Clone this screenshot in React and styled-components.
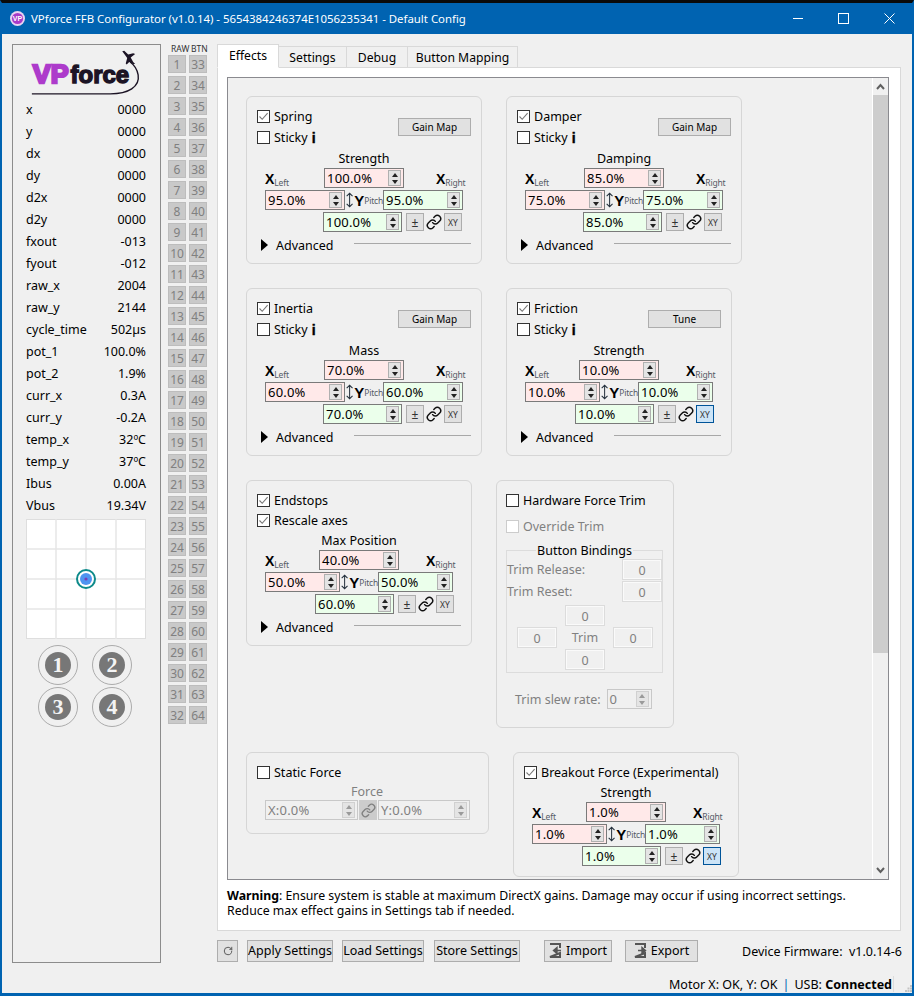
import React from 'react';
import styled, { createGlobalStyle } from 'styled-components';
import { Link, RotateCw } from 'lucide-react';

const GlobalStyle = createGlobalStyle`
  html, body {
    margin: 0;
    padding: 0;
    background: #f0f0f0;
  }
  * {
    box-sizing: border-box;
  }
  body {
    font-family: "Noto Sans", "Open Sans", sans-serif;
    font-size: 12.5px;
    color: #000000;
  }
`

const Window = styled.div`
  display: flex;
  flex-direction: column;
  width: 914px;
  height: 996px;
  overflow: hidden;
  background: #f0f0f0;
  border-top: 3px solid #0a0a0a;
  border-left: 2px solid #0063b1;
  border-right: 2px solid #0063b1;
  border-bottom: 3px solid #0063b1;
`

const TitleBar = styled.div`
  display: flex;
  align-items: center;
  flex: none;
  height: 31px;
  padding-left: 8px;
  background: #0063b1;
  color: #ffffff;
`

const TitleText = styled.div`
  flex: 1;
  margin-left: 6px;
  font-size: 11.4px;
`

const WindowButton = styled.div`
  display: flex;
  align-items: center;
  justify-content: center;
  width: 45.5px;
  height: 31px;
`

const Main = styled.div`
  display: flex;
  align-items: flex-start;
  flex: none;
  height: 928px;
  padding: 10px 0 0 10px;
`

const LeftPanel = styled.div`
  display: flex;
  flex-direction: column;
  flex: none;
  width: 149px;
  height: 919px;
  padding: 0 14px 0 13px;
  border: 1px solid #8c8c8c;
`

const LogoWrap = styled.div`
  display: flex;
  flex: none;
  height: 53px;
  margin: 0 -13px;
`

const StatRow = styled.div`
  display: flex;
  align-items: center;
  justify-content: space-between;
  flex: none;
  height: 22px;
  white-space: nowrap;
`

const PlotWrap = styled.div`
  display: flex;
  flex: none;
  margin-top: 3px;
`

const HatGrid = styled.div`
  display: grid;
  grid-template-columns: 40px 40px;
  column-gap: 14px;
  row-gap: 2px;
  justify-content: center;
  margin: 6px 1px 0 -1px;
`

const HatButton = styled.div`
  display: flex;
  align-items: center;
  justify-content: center;
  width: 40px;
  height: 40px;
  border: 1px solid #ababab;
  border-radius: 50%;
`

const HatFace = styled.div`
  display: flex;
  align-items: center;
  justify-content: center;
  width: 26px;
  height: 26px;
  border-radius: 50%;
  background: #777777;
  color: #f4f4f4;
  font-family: "Liberation Serif", serif;
  font-weight: 700;
  font-size: 22px;
`

const RawColumn = styled.div`
  flex: none;
  width: 40px;
  margin-left: 7px;
`

const RawHeader = styled.div`
  display: grid;
  grid-template-columns: 20px 17px;
  height: 11px;
  padding-left: 3px;
  font-size: 8.5px;
  line-height: 9px;
  color: #333333;
  white-space: nowrap;
`

const RawGrid = styled.div`
  display: grid;
  grid-template-columns: 18px 18px;
  grid-auto-rows: 18px;
  gap: 3px;
`

const RawCell = styled.div`
  display: flex;
  align-items: center;
  justify-content: center;
  background: #c9c9c9;
  border: 1px solid #bdbdbd;
  color: #808080;
  font-size: 12px;
`

const RightColumn = styled.div`
  display: flex;
  flex-direction: column;
  flex: none;
  width: 684px;
  margin-left: 9px;
`

const TabBar = styled.div`
  position: relative;
  z-index: 1;
  display: flex;
  align-items: flex-end;
  flex: none;
  height: 24px;
  margin-bottom: -1px;
`

const Tab = styled.div`
  display: flex;
  align-items: center;
  justify-content: center;
  width: ${p => p.$w}px;
  height: ${p => (p.$active ? 24 : 22)}px;
  padding-bottom: ${p => (p.$active ? 2 : 0)}px;
  background: ${p => (p.$active ? '#ffffff' : '#f0f0f0')};
  border: 1px solid #d9d9d9;
  border-left-width: ${p => (p.$active ? 1 : 0)}px;
  border-bottom-color: ${p => (p.$active ? '#ffffff' : '#d9d9d9')};
  font-size: 12.2px;
`

const Pane = styled.div`
  display: flex;
  flex-direction: column;
  flex: none;
  height: 864px;
  padding: 9px 11px 0 9px;
  background: #ffffff;
  border: 1px solid #d9d9d9;
`

const ScrollFrame = styled.div`
  display: flex;
  flex: none;
  height: 803px;
  overflow: hidden;
  background: #f0f0f0;
  border: 1px solid #8a8a8f;
`

const ScrollContent = styled.div`
  display: flex;
  flex-direction: column;
  flex: 1;
  gap: 24px;
  padding: 18px 0 0 18px;
  overflow: hidden;
`

const CardRow = styled.div`
  display: flex;
  align-items: flex-start;
  flex: none;
  gap: 24px;
`

const Scrollbar = styled.div`
  display: flex;
  flex-direction: column;
  align-items: stretch;
  flex: none;
  width: 16px;
  border-left: 1px solid #ffffff;
`

const ScrollArrow = styled.div`
  display: flex;
  align-items: center;
  justify-content: center;
  flex: none;
  height: 17px;
`

const ScrollThumb = styled.div`
  flex: none;
  height: 558px;
  background: #cdcdcd;
`

const ScrollTrack = styled.div`
  flex: 1;
`

const Card = styled.div`
  flex: none;
  width: ${p => p.$w}px;
  height: ${p => p.$h}px;
  padding: 9px 10px 0 ${p => p.$pl || 10}px;
  border: 1px solid #d6d6d6;
  border-radius: 6px;
`

const CardHeader = styled.div`
  display: flex;
  align-items: center;
  justify-content: space-between;
`

const CheckRow = styled.div`
  display: flex;
  align-items: center;
  gap: 4px;
  height: ${p => p.$h || 20}px;
  margin-top: ${p => p.$mt || 0}px;
  color: ${p => (p.$disabled ? '#808080' : '#000000')};
  white-space: nowrap;
`

const CheckBox = styled.span`
  display: flex;
  align-items: center;
  justify-content: center;
  flex: none;
  width: 13px;
  height: 13px;
  background: #ffffff;
  border: 1px solid ${p => (p.$disabled ? '#cccccc' : '#333333')};
`

const Info = styled.b`
  font-family: "Liberation Sans", sans-serif;
  font-size: 14px;
  font-weight: 700;
  -webkit-text-stroke: 0.4px #000000;
`

const SmallButton = styled.div`
  display: flex;
  align-items: center;
  justify-content: center;
  flex: none;
  width: 73px;
  height: 18px;
  background: #e1e1e1;
  border: 1px solid #adadad;
  font-size: 10px;
`

const Gains = styled.div`
  margin-left: 8px;
`

const Caption = styled.div`
  width: ${p => p.$w}px;
  height: ${p => p.$h || 20}px;
  margin-left: ${p => p.$ml}px;
  line-height: ${p => (p.$h || 20) + 2}px;
  text-align: center;
  white-space: nowrap;
  color: ${p => (p.$disabled ? '#808080' : '#000000')};
`

const GainRow = styled.div`
  display: flex;
  align-items: center;
  height: 20px;
  margin-bottom: 2px;
  padding-left: ${p => p.$pl || 0}px;
`

const AxisLabel = styled.div`
  display: flex;
  align-items: flex-end;
  flex: none;
  width: ${p => p.$w}px;
  height: 20px;
  margin-left: ${p => p.$ml || 0}px;
  padding-bottom: 1px;
  font-family: "Liberation Sans", sans-serif;
  font-size: 14px;
  font-weight: 700;
  line-height: 15px;
  white-space: nowrap;
`

const AxisSub = styled.span`
  font-family: "Noto Sans", sans-serif;
  font-size: 8.5px;
  font-weight: 400;
  line-height: 9px;
  color: #555b66;
  letter-spacing: -0.2px;
`

const PitchLabel = styled.div`
  display: flex;
  align-items: center;
  flex: none;
  width: 38px;
  height: 20px;
  font-family: "Liberation Sans", sans-serif;
  font-size: 15px;
  font-weight: 700;
  white-space: nowrap;
  overflow: hidden;
`

const SpinBox = styled.div`
  display: flex;
  align-items: center;
  flex: none;
  width: ${p => p.$w}px;
  height: 20px;
  padding-left: 2px;
  background: ${p => ({ red: '#ffe9e9', green: '#ebffeb' }[p.$tone] || 'transparent')};
  border: 1px solid ${p => (p.$disabled ? '#c8c8c8' : '#7a7a7a')};
  color: ${p => (p.$disabled ? '#808080' : '#000000')};
  font-size: 13px;
  letter-spacing: 0.2px;
`

const SpinValue = styled.span`
  flex: 1;
  white-space: nowrap;
`

const Stepper = styled.div`
  display: flex;
  flex-direction: column;
  flex: none;
  width: 13px;
  height: 16px;
  margin-right: 2px;
  background: #e4e4e4;
  border: 1px solid ${p => (p.$disabled ? '#d0d0d0' : '#b0b0b0')};
`

const StepArrow = styled.span`
  display: flex;
  align-items: center;
  justify-content: center;
  flex: 1;

  &::after {
    content: "";
    border-left: 3px solid transparent;
    border-right: 3px solid transparent;
    ${p => (p.$down ? 'border-top' : 'border-bottom')}: 4px solid ${p => (p.$disabled ? '#9a9a9a' : '#222222')};
  }
`

const SquareButton = styled.div`
  display: flex;
  align-items: center;
  justify-content: center;
  flex: none;
  width: 18px;
  height: 18px;
  margin-left: ${p => p.$ml || 0}px;
  background: ${p => (p.$on ? '#cce4f7' : '#e1e1e1')};
  border: 1px solid ${p => (p.$on ? '#005499' : '#adadad')};
  color: #333333;
  font-size: ${p => p.$fs || 8.5}px;
`

const ChainSlot = styled.div`
  display: flex;
  align-items: center;
  justify-content: center;
  flex: none;
  width: 20px;
  height: 18px;
`

const AdvancedRow = styled.div`
  display: flex;
  align-items: center;
  height: 20px;
  margin-top: 3px;
`

const Triangle = styled.span`
  flex: none;
  margin: 0 8px 0 4px;
  border-top: 6.5px solid transparent;
  border-bottom: 6.5px solid transparent;
  border-left: 7px solid #000000;
`

const AdvancedRule = styled.span`
  flex: 1;
  height: 1px;
  margin: 0 0 4px 20px;
  background: #a8a8a8;
`

const Bindings = styled.fieldset`
  width: 157px;
  height: 132px;
  margin: 5px 0 0;
  padding: 0;
  border: 1px solid #dcdcdc;

  legend {
    height: 18px;
    margin: 0 auto;
    padding: 0 1px;
    line-height: 20px;
  }
`

const BindingRow = styled.div`
  display: flex;
  align-items: center;
  justify-content: space-between;
  height: 21px;
  margin-bottom: 1px;
  line-height: 21px;
  color: #808080;
`

const BindingBox = styled.div`
  display: flex;
  align-items: center;
  justify-content: center;
  width: 40px;
  height: 21px;
  padding-top: 1px;
  border: 1px solid #dcdcdc;
  box-shadow: inset 0 0 0 1px #fafafa;
  color: #808080;
`

const TrimCross = styled.div`
  display: grid;
  grid-template-columns: 40px 40px 40px;
  grid-auto-rows: 21px;
  gap: 1px 8px;
  align-items: center;
  justify-items: center;
  margin: 3px 0 0 10px;
  color: #808080;
`

const SlewRow = styled.div`
  display: flex;
  align-items: center;
  height: 20px;
  margin: 16px 0 0 9px;
  color: #808080;
  gap: 6px;
  white-space: nowrap;
`

const StaticRow = styled.div`
  display: flex;
  align-items: center;
  margin-left: 8px;
  gap: 1px;
`

const DisabledChain = styled.div`
  display: flex;
  align-items: center;
  justify-content: center;
  flex: none;
  width: 18px;
  height: 20px;
  background: #cccccc;
`

const Warning = styled.div`
  margin-top: 8px;
  font-size: 12.3px;
  line-height: 15px;
  white-space: nowrap;
`

const Footer = styled.div`
  display: flex;
  align-items: center;
  flex: none;
  height: 23px;
  margin-top: 8px;
`

const FootButton = styled.div`
  display: flex;
  align-items: center;
  justify-content: center;
  gap: 4px;
  flex: none;
  width: ${p => p.$w}px;
  height: 22px;
  margin-left: ${p => p.$ml || 0}px;
  background: #e1e1e1;
  border: 1px solid #adadad;
  white-space: nowrap;
`

const Firmware = styled.div`
  margin-left: 44px;
  padding-top: 2px;
  white-space: nowrap;
`

const StatusBar = styled.div`
  display: flex;
  align-items: center;
  justify-content: flex-end;
  flex: 1;
  padding-top: 13px;
  white-space: nowrap;
`

const StatusPipe = styled.span`
  margin: 0 5px;
  color: #0063b1;
`

const StatusDivider = styled.span`
  flex: none;
  width: 1px;
  height: 16px;
  margin: 0 11px 0 1px;
  background: #dcdcdc;
`

const SizeGrip = styled.span`
  display: flex;
  flex: none;
  align-self: flex-end;
  width: 7px;
  height: 7px;
  margin-bottom: 1px;
`

const stats = [
  ['x', '0000'], ['y', '0000'], ['dx', '0000'], ['dy', '0000'], ['d2x', '0000'],
  ['d2y', '0000'], ['fxout', '-013'], ['fyout', '-012'], ['raw_x', '2004'], ['raw_y', '2144'],
  ['cycle_time', '502µs'], ['pot_1', '100.0%'], ['pot_2', '1.9%'], ['curr_x', '0.3A'], ['curr_y', '-0.2A'],
  ['temp_x', '32ºC'], ['temp_y', '37ºC'], ['Ibus', '0.00A'], ['Vbus', '19.34V'],
]

const WIDE = { lead: 59, top: 80, side: 80, gap: 32, labelW: 30, bottomLead: 58 }
const NARROW = { lead: 54, top: 80, side: 75, gap: 27, labelW: 30, bottomLead: 50 }

const Check = ({ on, disabled }) => (
  <CheckBox $disabled={disabled}>
    {on && (
      <svg width="11" height="11" viewBox="0 0 11 11">
        <path d="M1.5 5.5 L4.2 8.3 L9.6 2.2" fill="none" stroke="#777777" strokeWidth="1.1" />
      </svg>
    )}
  </CheckBox>
)

const Spin = ({ w, tone, value, disabled }) => (
  <SpinBox $w={w} $tone={tone} $disabled={disabled}>
    <SpinValue>{value}</SpinValue>
    <Stepper $disabled={disabled}>
      <StepArrow $disabled={disabled} />
      <StepArrow $down $disabled={disabled} />
    </Stepper>
  </SpinBox>
)

const PitchArrow = () => (
  <svg width="11" height="20" viewBox="0 0 11 20">
    <path d="M5.5 2 V18 M2 5.5 L5.5 2 L9 5.5 M2 14.5 L5.5 18 L9 14.5" fill="none" stroke="#24303c" strokeWidth="1.2" />
  </svg>
)

const GainCluster = ({ caption, values, layout, xyOn }) => (
  <Gains>
    <Caption $ml={layout.lead} $w={layout.top}>{caption}</Caption>
    <GainRow>
      <AxisLabel $w={layout.lead}>X<AxisSub>Left</AxisSub></AxisLabel>
      <Spin w={layout.top} tone="red" value={values[0]} />
      <AxisLabel $w={layout.labelW} $ml={layout.gap}>X<AxisSub>Right</AxisSub></AxisLabel>
    </GainRow>
    <GainRow>
      <Spin w={layout.side} tone="red" value={values[1]} />
      <PitchLabel><PitchArrow />Y<AxisSub>Pitch</AxisSub></PitchLabel>
      <Spin w={layout.side} tone="green" value={values[2]} />
    </GainRow>
    <GainRow $pl={layout.bottomLead}>
      <Spin w={79} tone="green" value={values[3]} />
      <SquareButton $fs={12} $ml={4}>±</SquareButton>
      <ChainSlot><Link size={16} strokeWidth={2.2} color="#111111" /></ChainSlot>
      <SquareButton $on={xyOn}>XY</SquareButton>
    </GainRow>
  </Gains>
)

const Advanced = () => (
  <AdvancedRow>
    <Triangle />
    Advanced
    <AdvancedRule />
  </AdvancedRow>
)

const EffectCard = ({ w, title, button, caption, values, layout, xyOn }) => (
  <Card $w={w} $h={168}>
    <CardHeader>
      <div>
        <CheckRow $h={21}><Check on />{title}</CheckRow>
        <CheckRow $h={21}><Check />Sticky <Info>i</Info></CheckRow>
      </div>
      <SmallButton>{button}</SmallButton>
    </CardHeader>
    <GainCluster caption={caption} values={values} layout={layout} xyOn={xyOn} />
    <Advanced />
  </Card>
)

const Logo = () => (
  <svg width="147" height="53" viewBox="0 0 147 53">
    <text x="20" y="38" fontFamily="Liberation Sans" fontWeight="700" fontSize="26" fill="#ad3bcb" stroke="#ad3bcb" strokeWidth="2.4" textLength="36" lengthAdjust="spacingAndGlyphs">VP</text>
    <text x="58" y="38" fontFamily="Liberation Sans" fontWeight="700" fontSize="24" fill="#1c1425" stroke="#1c1425" strokeWidth="1.4" textLength="59" lengthAdjust="spacingAndGlyphs">force</text>
    <path d="M19 49 H98 C116 49 128 42 126 30 C125 24 122 20 118 17" fill="none" stroke="#1c1425" strokeWidth="1.4" />
    <path d="M110 6 L112 5.5 L116 9.5 L121 8 L123 9 L118.5 12.5 L121 17 L123 19 L121 19 L117 17 L114.5 19.5 L113.5 18.5 L115 13 Z" fill="#1c1425" />
  </svg>
)

const Plot = () => (
  <svg width="120" height="120" viewBox="0 0 120 120">
    <rect x="0.5" y="0.5" width="119" height="119" fill="#ffffff" stroke="#dedede" />
    <path d="M30 0 V120 M60 0 V120 M90 0 V120 M0 30 H120 M0 60 H120 M0 90 H120" stroke="#e6e6e6" strokeWidth="1.5" />
    <circle cx="60" cy="60" r="9" fill="#ffffff" stroke="#0d8a8a" strokeWidth="2" />
    <circle cx="60" cy="60" r="6" fill="#4f94f0" />
    <circle cx="60" cy="60" r="1.6" fill="#7a3fb5" />
  </svg>
)

const RefreshIcon = () => <RotateCw size={10} strokeWidth={2} color="#444444" />

const DoorIcon = ({ flip }) => (
  <svg width="13" height="15" viewBox="0 0 13 15">
    <path d="M1 1 H11 V5 M11 10 V14 H1 Z" fill="none" stroke="#555555" strokeWidth="2" />
    {flip
      ? <path d="M4 7.5 H10 M8 4.5 L11.5 7.5 L8 10.5 Z" fill="#555555" stroke="#555555" strokeWidth="1.4" />
      : <path d="M6 7.5 H12 M8 4.5 L4.5 7.5 L8 10.5 Z" fill="#555555" stroke="#555555" strokeWidth="1.4" />}
  </svg>
)

const App = () => (
  <Window>
    <GlobalStyle />
    <TitleBar>
      <svg width="15" height="15" viewBox="0 0 15 15">
        <circle cx="7.5" cy="7.5" r="7.5" fill="#e9d4f2" />
        <circle cx="7.5" cy="7.5" r="5.6" fill="#a73ac8" />
        <text x="7.5" y="10" textAnchor="middle" fontFamily="Liberation Sans" fontWeight="700" fontSize="7" fill="#ffffff">VP</text>
      </svg>
      <TitleText>VPforce FFB Configurator (v1.0.14) - 5654384246374E1056235341 - Default Config</TitleText>
      <WindowButton>
        <svg width="11" height="11" viewBox="0 0 11 11"><path d="M0 5.5 H10" stroke="#ffffff" /></svg>
      </WindowButton>
      <WindowButton>
        <svg width="11" height="11" viewBox="0 0 11 11"><rect x="0.5" y="0.5" width="10" height="10" fill="none" stroke="#ffffff" /></svg>
      </WindowButton>
      <WindowButton>
        <svg width="11" height="11" viewBox="0 0 11 11"><path d="M0.5 0.5 L10.5 10.5 M10.5 0.5 L0.5 10.5" stroke="#ffffff" /></svg>
      </WindowButton>
    </TitleBar>

    <Main>
      <LeftPanel>
        <LogoWrap><Logo /></LogoWrap>
        {stats.map(([name, value]) => (
          <StatRow key={name}><span>{name}</span><span>{value}</span></StatRow>
        ))}
        <PlotWrap><Plot /></PlotWrap>
        <HatGrid>
          {[1, 2, 3, 4].map(n => (
            <HatButton key={n}><HatFace>{n}</HatFace></HatButton>
          ))}
        </HatGrid>
      </LeftPanel>

      <RawColumn>
        <RawHeader><span>RAW</span><span>BTN</span></RawHeader>
        <RawGrid>
          {Array.from({ length: 32 }, (_, i) => (
            <React.Fragment key={i}>
              <RawCell>{i + 1}</RawCell>
              <RawCell>{i + 33}</RawCell>
            </React.Fragment>
          ))}
        </RawGrid>
      </RawColumn>

      <RightColumn>
        <TabBar>
          <Tab $active $w={62}>Effects</Tab>
          <Tab $w={68}>Settings</Tab>
          <Tab $w={61}>Debug</Tab>
          <Tab $w={110}>Button Mapping</Tab>
        </TabBar>
        <Pane>
          <ScrollFrame>
            <ScrollContent>
              <CardRow>
                <EffectCard w={236} title="Spring" button="Gain Map" caption="Strength" values={['100.0%', '95.0%', '95.0%', '100.0%']} layout={WIDE} />
                <EffectCard w={236} title="Damper" button="Gain Map" caption="Damping" values={['85.0%', '75.0%', '75.0%', '85.0%']} layout={WIDE} />
              </CardRow>
              <CardRow>
                <EffectCard w={236} title="Inertia" button="Gain Map" caption="Mass" values={['70.0%', '60.0%', '60.0%', '70.0%']} layout={WIDE} />
                <EffectCard w={226} title="Friction" button="Tune" caption="Strength" values={['10.0%', '10.0%', '10.0%', '10.0%']} layout={NARROW} xyOn />
              </CardRow>
              <CardRow>
                <Card $w={226} $h={166}>
                  <CheckRow><Check on />Endstops</CheckRow>
                  <CheckRow><Check on />Rescale axes</CheckRow>
                  <GainCluster caption="Max Position" values={['40.0%', '50.0%', '50.0%', '60.0%']} layout={NARROW} />
                  <Advanced />
                </Card>
                <Card $w={178} $h={248} $pl={9}>
                  <CheckRow><Check />Hardware Force Trim</CheckRow>
                  <CheckRow $disabled $mt={6}><Check disabled />Override Trim</CheckRow>
                  <Bindings>
                    <legend>Button Bindings</legend>
                    <BindingRow>Trim Release:<BindingBox>0</BindingBox></BindingRow>
                    <BindingRow>Trim Reset:<BindingBox>0</BindingBox></BindingRow>
                    <TrimCross>
                      <span />
                      <BindingBox>0</BindingBox>
                      <span />
                      <BindingBox>0</BindingBox>
                      <span>Trim</span>
                      <BindingBox>0</BindingBox>
                      <span />
                      <BindingBox>0</BindingBox>
                      <span />
                    </TrimCross>
                  </Bindings>
                  <SlewRow>Trim slew rate:<Spin w={45} value="0" disabled /></SlewRow>
                </Card>
              </CardRow>
              <CardRow>
                <Card $w={243} $h={82}>
                  <CheckRow><Check />Static Force</CheckRow>
                  <Caption $ml={8} $w={204} $h={18} $disabled>Force</Caption>
                  <StaticRow>
                    <Spin w={93} value="X:0.0%" disabled />
                    <DisabledChain><Link size={15} strokeWidth={2.2} color="#808080" /></DisabledChain>
                    <Spin w={92} value="Y:0.0%" disabled />
                  </StaticRow>
                </Card>
                <Card $w={226} $h={125}>
                  <CheckRow><Check on />Breakout Force (Experimental)</CheckRow>
                  <GainCluster caption="Strength" values={['1.0%', '1.0%', '1.0%', '1.0%']} layout={NARROW} xyOn />
                </Card>
              </CardRow>
            </ScrollContent>
            <Scrollbar>
              <ScrollArrow>
                <svg width="9" height="7" viewBox="0 0 9 7"><path d="M1 6 L4.5 2 L8 6" fill="none" stroke="#606060" strokeWidth="2" /></svg>
              </ScrollArrow>
              <ScrollThumb />
              <ScrollTrack />
              <ScrollArrow>
                <svg width="9" height="7" viewBox="0 0 9 7"><path d="M1 1 L4.5 5 L8 1" fill="none" stroke="#606060" strokeWidth="2" /></svg>
              </ScrollArrow>
            </Scrollbar>
          </ScrollFrame>
          <Warning>
            <b>Warning</b>: Ensure system is stable at maximum DirectX gains. Damage may occur if using incorrect settings.
            <br />
            Reduce max effect gains in Settings tab if needed.
          </Warning>
        </Pane>
        <Footer>
          <FootButton $w={21}><RefreshIcon /></FootButton>
          <FootButton $w={86} $ml={9}>Apply Settings</FootButton>
          <FootButton $w={82} $ml={9}>Load Settings</FootButton>
          <FootButton $w={86} $ml={10}>Store Settings</FootButton>
          <FootButton $w={68} $ml={24}><DoorIcon />Import</FootButton>
          <FootButton $w={73} $ml={13}><DoorIcon flip />Export</FootButton>
          <Firmware>Device Firmware: &nbsp;v1.0.14-6</Firmware>
        </Footer>
      </RightColumn>
    </Main>

    <StatusBar>
      Motor X: OK, Y: OK<StatusPipe>|</StatusPipe>USB:&nbsp;<b>Connected</b>
      <StatusDivider />
      <SizeGrip>
        <svg width="7" height="7" viewBox="0 0 7 7">
          <path d="M5 0 h2 v2 h-2 Z M2.500 2.500 h2 v2 h-2 Z M5 2.500 h2 v2 h-2 Z M0 5 h2 v2 h-2 Z M2.500 5 h2 v2 h-2 Z M5 5 h2 v2 h-2 Z" fill="#c4c4c4" />
        </svg>
      </SizeGrip>
    </StatusBar>
  </Window>
)

export default App;
